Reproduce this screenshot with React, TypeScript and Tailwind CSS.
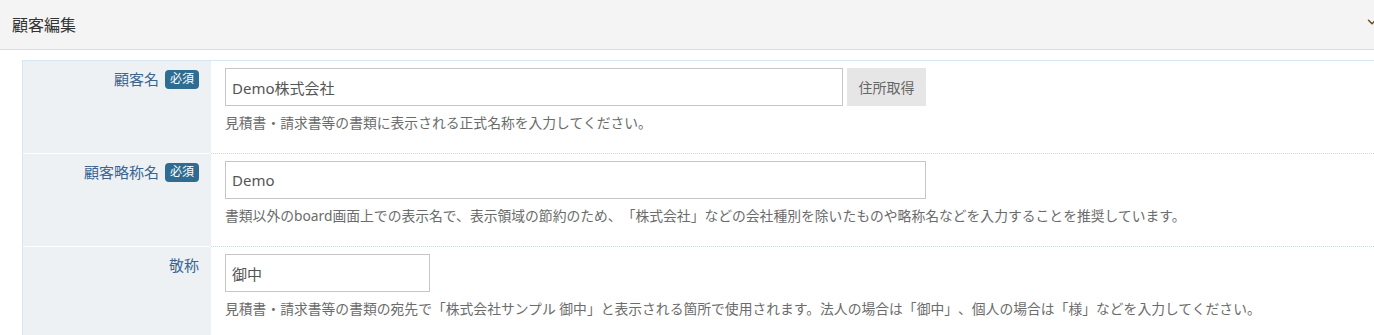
import { ChevronDown } from "lucide-react";

const font = "font-['Noto_Sans','Noto_Sans_CJK_JP',sans-serif]";

type Row = {
  label: string;
  required?: boolean;
  value: string;
  inputWidth: string;
  help: string;
  button?: string;
};

const rows: Row[] = [
  {
    label: "顧客名",
    required: true,
    value: "Demo株式会社",
    inputWidth: "w-[618px]",
    help: "見積書・請求書等の書類に表示される正式名称を入力してください。",
    button: "住所取得",
  },
  {
    label: "顧客略称名",
    required: true,
    value: "Demo",
    inputWidth: "w-[701px]",
    help: "書類以外のboard画面上での表示名で、表示領域の節約のため、「株式会社」などの会社種別を除いたものや略称名などを入力することを推奨しています。",
  },
  {
    label: "敬称",
    value: "御中",
    inputWidth: "w-[205px]",
    help: "見積書・請求書等の書類の宛先で「株式会社サンプル 御中」と表示される箇所で使用されます。法人の場合は「御中」、個人の場合は「様」などを入力してください。",
  },
];

const FormRow = ({ row }: { row: Row }) => (
  <div className="grid grid-cols-[188px_1fr]">
    {/* label cell */}
    <div className="bg-[#edf1f4] border-b border-white pt-[7px] pr-3 flex justify-end items-start h-[93px]">
      <div className="flex items-center gap-[6px] h-[22px]">
        <span className="text-[15px] text-[#3b6590]">{row.label}</span>
        {row.required && (
          <span className="bg-[#2f6c92] text-white text-[12px] leading-none rounded-[4px] px-[5px] py-[3.5px]">
            必須
          </span>
        )}
      </div>
    </div>
    {/* input cell */}
    <div className="border-b border-dotted border-[#c6dbec] pl-[14px] pt-[7px]">
      <div className="flex items-center gap-[4px]">
        <input
          readOnly
          value={row.value}
          className={`${row.inputWidth} h-[38px] border border-[#c6c6c6] bg-white px-[6px] text-[15px] text-[#555] outline-none ${font}`}
        />
        {row.button && (
          <button className="h-[38px] w-[79px] bg-[#e6e6e6] text-[14px] text-[#666]">
            {row.button}
          </button>
        )}
      </div>
      <p className="mt-[7px] text-[13.8px] leading-[20px] text-[#6b6b6b] whitespace-nowrap">
        {row.help}
      </p>
    </div>
  </div>
);

export default function App() {
  return (
    <div className={`w-[1374px] h-[335px] overflow-hidden bg-white [text-spacing-trim:space-all] ${font}`}>
      <div className="w-[1420px]">
        {/* Header */}
        <div className="h-[50px] bg-[#f4f4f4] border-b border-[#dedede] flex items-center pl-3">
          <h2 className="text-[16px] text-[#333] flex-1">顧客編集</h2>
          <ChevronDown className="w-[14px] h-[14px] text-[#6b4a1f] mr-[41px] -mt-[6px]" strokeWidth={2.5} />
        </div>

        <div className="pt-[10px] pl-[22px]">
          <div className="border-t border-l border-[#d6e6f2]">
            {rows.map((r) => (
              <FormRow key={r.label} row={r} />
            ))}
          </div>
        </div>
      </div>
    </div>
  );
}
